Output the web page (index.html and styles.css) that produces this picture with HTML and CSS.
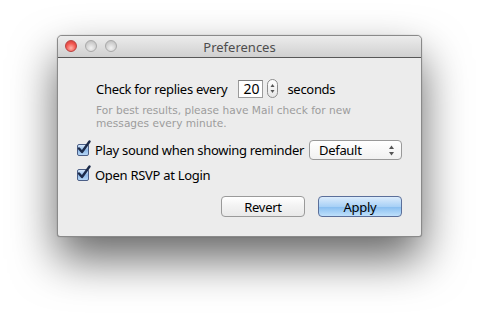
FILE: index.html
```html
<!DOCTYPE html>
<html lang="en">
<head>
  <meta charset="UTF-8">
  <title>Preferences</title>
  <link rel="stylesheet" href="styles.css">
</head>
<body>
  <div class="stage">
    <div class="window">
      <div class="titlebar">
        <div class="lights">
          <span class="light close"></span>
          <span class="light"></span>
          <span class="light"></span>
        </div>
        <div class="title">Preferences</div>
      </div>

      <div class="content">
        <div class="row interval">
          <span>Check for replies every</span>
          <span class="field">20</span>
          <span class="stepper">
            <svg width="9" height="17" viewBox="0 0 9 17">
              <path d="M4.5 4 L6.5 7 L2.5 7 Z" fill="#555"/>
              <path d="M4.5 13 L6.5 10 L2.5 10 Z" fill="#555"/>
            </svg>
          </span>
          <span>seconds</span>
        </div>
        <p class="hint">For best results, please have Mail check for new<br>messages every minute.</p>

        <div class="row check-row">
          <span class="checkbox">
            <svg width="16" height="16" viewBox="0 0 16 16">
              <path d="M3 8.5 L6 12 L13.5 1.5" fill="none" stroke="#1c2b4a" stroke-width="2.4" stroke-linecap="round" stroke-linejoin="round"/>
            </svg>
          </span>
          <span class="label">Play sound when showing reminder</span>
          <span class="popup">
            <span>Default</span>
            <svg width="7" height="11" viewBox="0 0 7 11">
              <path d="M3.5 0.5 L6 4 L1 4 Z" fill="#555"/>
              <path d="M3.5 10.5 L6 7 L1 7 Z" fill="#555"/>
            </svg>
          </span>
        </div>

        <div class="row check-row second">
          <span class="checkbox">
            <svg width="16" height="16" viewBox="0 0 16 16">
              <path d="M3 8.5 L6 12 L13.5 1.5" fill="none" stroke="#1c2b4a" stroke-width="2.4" stroke-linecap="round" stroke-linejoin="round"/>
            </svg>
          </span>
          <span class="label">Open RSVP at Login</span>
        </div>

        <div class="buttons">
          <button class="btn">Revert</button>
          <button class="btn primary">Apply</button>
        </div>
      </div>
    </div>
  </div>
</body>
</html>
```

FILE: styles.css
```css
* { box-sizing: border-box; }
body {
  margin: 0;
  background: #fff;
  font-family: "Noto Sans", "DejaVu Sans", sans-serif;
  font-size: 13px;
  color: #000;
}
.stage {
  height: 316px;
  padding: 35px 0 0 57px;
}
.window {
  width: 365px;
  height: 202px;
  background: #ececec;
  border: 1px solid #8a8a8a;
  border-radius: 5px 5px 3px 3px;
  box-shadow: 0 22px 45px rgba(0, 0, 0, 0.6), 0 0 1px rgba(0, 0, 0, 0.4);
  overflow: hidden;
}
.titlebar {
  position: relative;
  height: 22px;
  background: linear-gradient(#ececec, #d0d0d0);
  border-bottom: 1px solid #575757;
}
.lights {
  display: flex;
  gap: 8px;
  padding: 4px 0 0 7px;
}
.light {
  width: 12px;
  height: 12px;
  border-radius: 50%;
  border: 1px solid #a9a9a9;
  background: radial-gradient(circle at 50% 70%, #f2f2f2 0%, #d2d2d2 55%, #b8b8b8 100%);
}
.light.close {
  border-color: #b8413f;
  background: radial-gradient(circle at 50% 70%, #ffb3a9 0%, #f2554f 55%, #c83a36 100%);
}
.title {
  position: absolute;
  top: 2px;
  left: 0;
  right: 0;
  text-align: center;
  color: #4d4d4d;
}
.content {
  padding: 21px 0 0 19px;
  letter-spacing: -0.3px;
}
.row {
  display: flex;
  align-items: center;
  white-space: nowrap;
}
.interval {
  padding-left: 19px;
}
.field {
  width: 25px;
  height: 18px;
  margin-left: 11px;
  padding: 0 0 0 4px;
  background: #fff;
  border: 1px solid #9b9b9b;
  border-top-color: #7e7e7e;
  font-size: 14px;
  line-height: 16px;
  letter-spacing: 0;
}
.stepper {
  display: flex;
  width: 11px;
  height: 19px;
  margin: 0 9px 0 4px;
  border: 1px solid #8d8d8d;
  border-radius: 6px;
  background: linear-gradient(#fff, #e6e6e6);
}
.hint {
  margin: 6px 0 0 19px;
  font-family: "DejaVu Sans", sans-serif;
  font-size: 10.6px;
  line-height: 13px;
  letter-spacing: 0;
  color: #9c9c9c;
}
.check-row {
  height: 20px;
  margin-top: 10px;
}
.check-row.second {
  height: 14px;
  margin-top: 8px;
}
.checkbox {
  position: relative;
  flex: none;
  width: 12px;
  height: 12px;
  margin-right: 6px;
  border: 1px solid #4b5e86;
  border-radius: 2px;
  background: linear-gradient(#d7e9fb, #8fb9e8 50%, #b5d6f6);
}
.checkbox svg {
  position: absolute;
  left: -2px;
  top: -5px;
}
.popup {
  display: flex;
  align-items: center;
  justify-content: space-between;
  width: 93px;
  height: 20px;
  margin-left: 5px;
  padding: 0 6px 0 9px;
  border: 1px solid #999;
  border-radius: 4px;
  background: linear-gradient(#fff, #f1f1f1);
}
.buttons {
  display: flex;
  justify-content: flex-end;
  gap: 13px;
  margin: 14px 19px 0 0;
}
.btn {
  width: 84px;
  height: 21px;
  padding: 0;
  font: inherit;
  letter-spacing: inherit;
  color: #000;
  border: 1px solid #9a9a9a;
  border-radius: 4px;
  background: linear-gradient(#fff, #f2f2f2 50%, #e9e9e9);
}
.btn.primary {
  border-color: #5b6f9a;
  background: linear-gradient(#dcecfc, #a9d1f6 50%, #86bdf0 51%, #bfe0fb);
}
```
